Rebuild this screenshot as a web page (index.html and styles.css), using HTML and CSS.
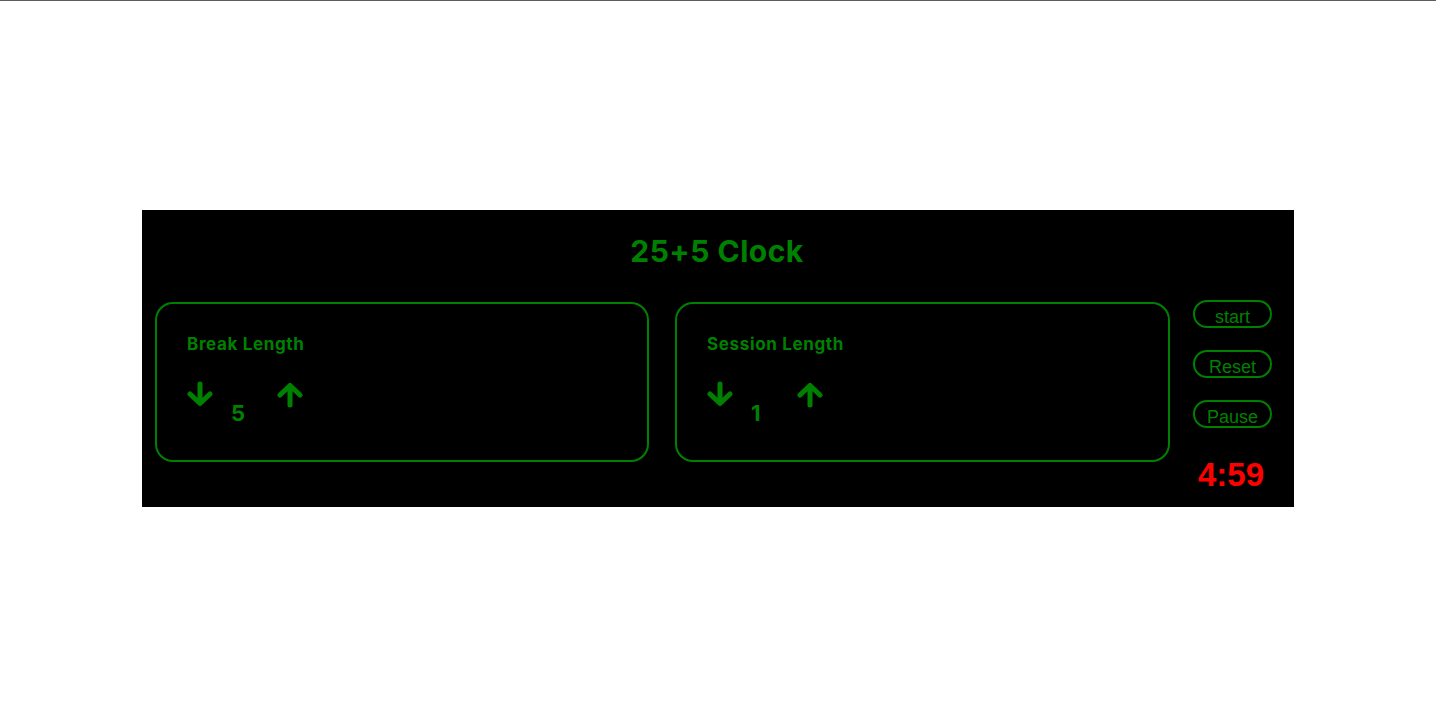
FILE: index.html
```html
<!DOCTYPE html>
<html lang="en">
<head>
<meta charset="utf-8">
<title>25+5 Clock</title>
<link rel="stylesheet" href="styles.css">
</head>
<body>
<div class="topline"></div>
<main class="app">
  <h1 class="title">25+5 Clock</h1>
  <div class="row">
    <section class="panel">
      <h2 class="label">Break Length</h2>
      <div class="controls">
        <svg class="arrow" viewBox="0 0 26 26" aria-label="decrement"><path d="M13 3V22M3 13L13 22.5L23 13"/></svg>
        <span class="value">5</span>
        <svg class="arrow up" viewBox="0 0 26 26" aria-label="increment"><path d="M13 23V4M3 13L13 3.5L23 13"/></svg>
      </div>
    </section>
    <section class="panel">
      <h2 class="label">Session Length</h2>
      <div class="controls">
        <svg class="arrow" viewBox="0 0 26 26" aria-label="decrement"><path d="M13 3V22M3 13L13 22.5L23 13"/></svg>
        <span class="value">1</span>
        <svg class="arrow up" viewBox="0 0 26 26" aria-label="increment"><path d="M13 23V4M3 13L13 3.5L23 13"/></svg>
      </div>
    </section>
    <aside class="side">
      <button class="btn">start</button>
      <button class="btn">Reset</button>
      <button class="btn">Pause</button>
      <div class="time">4:59</div>
    </aside>
  </div>
</main>
</body>
</html>
```

FILE: styles.css
```css
html, body {
  margin: 0;
  padding: 0;
  background: #ffffff;
}

.topline {
  height: 1px;
  background: #5c5c5c;
}

.app {
  width: 1152px;
  margin: 209px auto 0;
  background: #000000;
  box-sizing: border-box;
  padding: 23px 22px 13px 13px;
}

.title {
  margin: 0;
  padding-left: 7px;
  text-align: center;
  font-family: Inter, "Noto Sans", sans-serif;
  font-weight: 700;
  font-size: 30px;
  line-height: 36px;
  letter-spacing: 0.5px;
  color: #008000;
}

.row {
  display: flex;
  align-items: flex-start;
  margin-top: 31px;
}

.panel {
  box-sizing: border-box;
  width: 494px;
  height: 160px;
  margin-top: 2px;
  margin-right: 26px;
  border: 2px solid #008000;
  border-radius: 18px;
  padding: 30px 30px 0;
}

.panel + .panel {
  width: 495px;
  margin-right: 23px;
}

.label {
  margin: 0;
  font-family: Inter, "Noto Sans", sans-serif;
  font-weight: 700;
  font-size: 17px;
  line-height: 20px;
  letter-spacing: 0.65px;
  color: #008000;
}

.controls {
  display: flex;
  align-items: flex-start;
  margin-top: 27px;
}

.arrow {
  width: 26px;
  height: 26px;
  flex: none;
}

.arrow path {
  fill: none;
  stroke: #008000;
  stroke-width: 5;
  stroke-linecap: round;
  stroke-linejoin: round;
}

.arrow.up {
  margin-top: 1px;
}

.value {
  width: 64px;
  box-sizing: border-box;
  padding-left: 18px;
  margin-top: 19px;
  font-family: Inter, "Noto Sans", sans-serif;
  font-weight: 700;
  font-size: 22px;
  line-height: 26px;
  color: #008000;
}

.side {
  width: 79px;
  display: flex;
  flex-direction: column;
  align-items: stretch;
}

.btn {
  box-sizing: border-box;
  height: 28px;
  margin: 0 0 22px;
  padding: 6px 0 0;
  border: 2px solid #008000;
  border-radius: 14px;
  background: #000000;
  color: #008000;
  font-family: "Liberation Sans", Arial, sans-serif;
  font-size: 18px;
  line-height: 19px;
  text-align: center;
}

.btn:last-of-type {
  margin-bottom: 0;
}

.time {
  margin-top: 28px;
  padding-right: 3px;
  text-align: center;
  font-family: "Liberation Sans", Arial, sans-serif;
  font-weight: 700;
  font-size: 33px;
  line-height: 38px;
  color: #ff0000;
}
```
